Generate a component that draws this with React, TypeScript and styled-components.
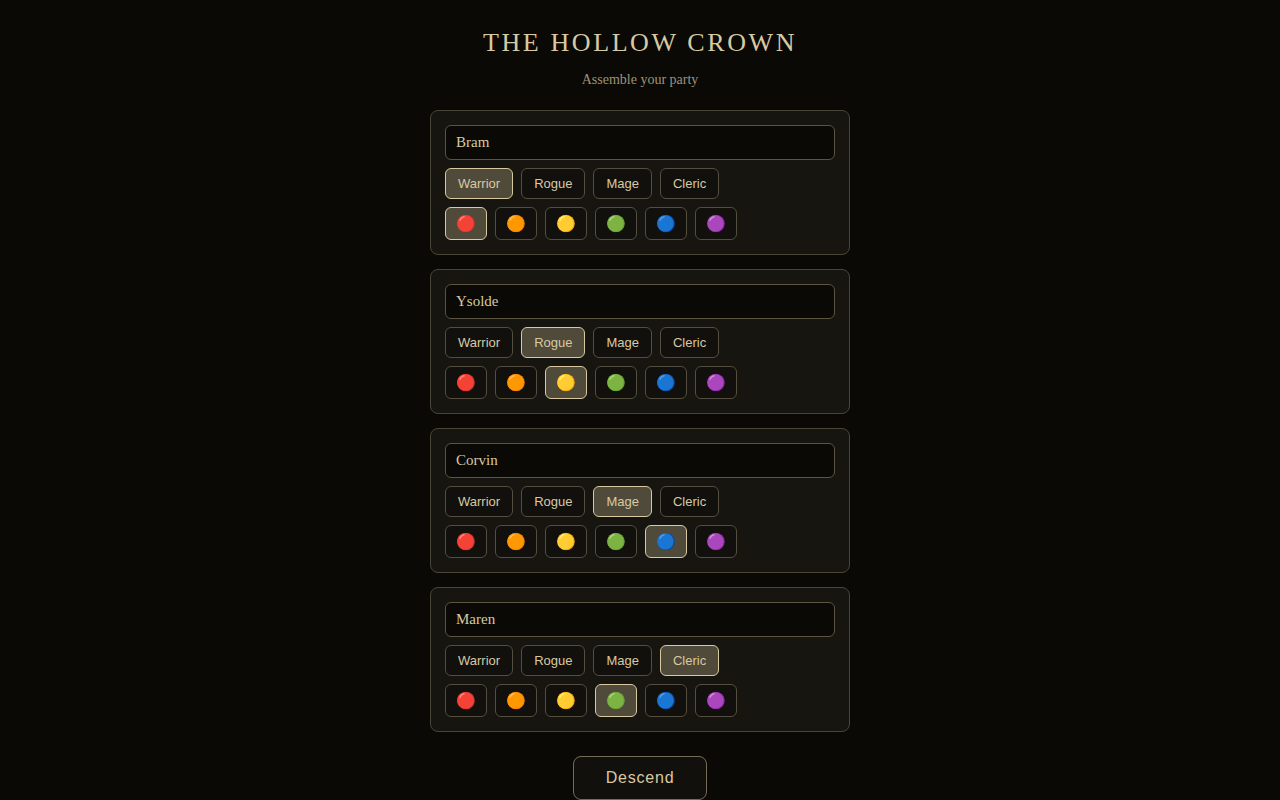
import React, { useState } from "react";
import styled, { createGlobalStyle, css } from "styled-components";

const GlobalStyle = createGlobalStyle`
  * { box-sizing: border-box; }
  body {
    margin: 0;
    background: #0a0905;
    color: #d8c9a3;
    font-family: "Liberation Serif", serif;
  }
`;

const Page = styled.main`
  display: flex;
  flex-direction: column;
  align-items: center;
  padding: 28px 16px 0;
`;

const Title = styled.h1`
  margin: 0;
  font-size: 26px;
  line-height: 30px;
  font-weight: 400;
  letter-spacing: 0.1em;
  text-align: center;
`;

const Subtitle = styled.p`
  margin: 14px 0 22px;
  font-size: 14px;
  line-height: 16px;
  color: #9f9478;
`;

const Party = styled.div`
  display: flex;
  flex-direction: column;
  gap: 14px;
  width: 100%;
  max-width: 420px;
`;

const HeroCard = styled.section`
  display: flex;
  flex-direction: column;
  gap: 8px;
  padding: 14px;
  background: #16150f;
  border: 1px solid #4a4637;
  border-radius: 8px;
`;

const NameInput = styled.input`
  width: 100%;
  height: 35px;
  padding: 8px 10px;
  background: #0a0905;
  border: 1px solid #5a5443;
  border-radius: 6px;
  color: #d8c9a3;
  font-family: "Liberation Serif", serif;
  font-size: 15px;
`;

const Options = styled.div`
  display: flex;
  flex-wrap: wrap;
  gap: 8px;
`;

const buttonBase = css`
  background: #12100d;
  color: #d8c9a3;
  font-family: "Liberation Sans", sans-serif;
  cursor: pointer;
`;

const OptionButton = styled.button<{ $selected: boolean }>`
  ${buttonBase}
  border: 1px solid ${(p) => (p.$selected ? "#d8c9a3" : "#544e40")};
  border-radius: 6px;
  ${(p) => p.$selected && "background: #4f4a3a;"}
`;

const ClassButton = styled(OptionButton)`
  height: 31px;
  padding: 0 12px;
  font-size: 13px;
`;

const ColorButton = styled(OptionButton)`
  height: 33px;
  padding: 0 10px;
  font-size: 16px;
`;

const DescendButton = styled.button`
  ${buttonBase}
  height: 44px;
  margin-top: 24px;
  padding: 0 32px;
  border: 1px solid #746c59;
  border-radius: 8px;
  font-size: 16px;
  letter-spacing: 0.05em;
`;

const CLASSES = ["Warrior", "Rogue", "Mage", "Cleric"];

const COLORS = [
  { name: "Red", glyph: "🔴" },
  { name: "Orange", glyph: "🟠" },
  { name: "Yellow", glyph: "🟡" },
  { name: "Green", glyph: "🟢" },
  { name: "Blue", glyph: "🔵" },
  { name: "Purple", glyph: "🟣" },
];

interface Hero {
  name: string;
  role: string;
  color: string;
}

const INITIAL: Hero[] = [
  { name: "Bram", role: "Warrior", color: "Red" },
  { name: "Ysolde", role: "Rogue", color: "Yellow" },
  { name: "Corvin", role: "Mage", color: "Blue" },
  { name: "Maren", role: "Cleric", color: "Green" },
];

export default function App() {
  const [heroes, setHeroes] = useState(INITIAL);
  const update = (index: number, patch: Partial<Hero>) =>
    setHeroes((all) => all.map((h, i) => (i === index ? { ...h, ...patch } : h)));

  return (
    <>
      <GlobalStyle />
      <Page>
        <Title>THE HOLLOW CROWN</Title>
        <Subtitle>Assemble your party</Subtitle>
        <Party>
          {heroes.map((hero, i) => (
            <HeroCard key={i}>
              <NameInput
                type="text"
                aria-label={`Hero ${i + 1} name`}
                value={hero.name}
                onChange={(e) => update(i, { name: e.target.value })}
              />
              <Options role="group" aria-label="Class">
                {CLASSES.map((role) => (
                  <ClassButton
                    key={role}
                    type="button"
                    $selected={hero.role === role}
                    aria-pressed={hero.role === role}
                    onClick={() => update(i, { role })}
                  >
                    {role}
                  </ClassButton>
                ))}
              </Options>
              <Options role="group" aria-label="Colour">
                {COLORS.map(({ name, glyph }) => (
                  <ColorButton
                    key={name}
                    type="button"
                    $selected={hero.color === name}
                    aria-pressed={hero.color === name}
                    aria-label={name}
                    onClick={() => update(i, { color: name })}
                  >
                    {glyph}
                  </ColorButton>
                ))}
              </Options>
            </HeroCard>
          ))}
        </Party>
        <DescendButton type="button">Descend</DescendButton>
      </Page>
    </>
  );
}
